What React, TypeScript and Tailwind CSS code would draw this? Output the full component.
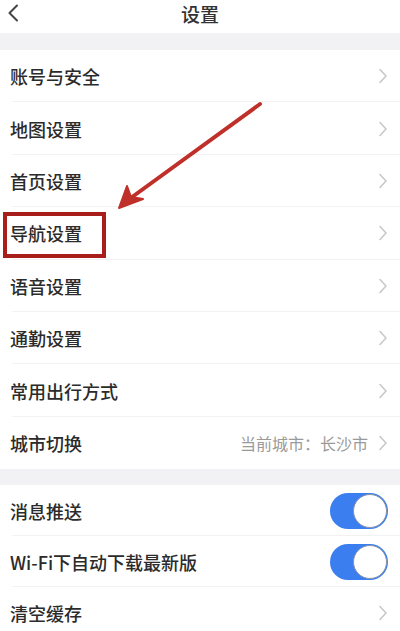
import React from "react";

const font = { fontFamily: '"Noto Sans CJK SC", "Noto Sans", sans-serif' };

function Chevron() {
  return (
    <svg width="10" height="16" viewBox="0 0 10 16" className="shrink-0">
      <path d="M2 1.5 L8 8 L2 14.5" fill="none" stroke="#c8c8cc" strokeWidth="1.6" strokeLinecap="round" strokeLinejoin="round" />
    </svg>
  );
}

function Toggle() {
  return (
    <div className="relative w-[58px] h-[36px] rounded-full bg-[#3a7ef0] shrink-0">
      <div className="absolute right-[1px] top-[1px] w-[34px] h-[34px] rounded-full bg-white border border-[#8c94a6]" />
    </div>
  );
}

function Row({ label, value, toggle, last, h = "h-[52.4px]" }: { label: string; value?: string; toggle?: boolean; last?: boolean; h?: string }) {
  return (
    <div className={`relative ${h} flex items-center pl-[10px] pr-[12px]`}>
      <span className="flex-1 text-[18px] font-medium text-[#2b2b2b] leading-none">{label}</span>
      {value && <span className="text-[16px] text-[#9a9a9a] mr-[10px] leading-none">{value}</span>}
      {toggle ? <Toggle /> : <Chevron />}
      {!last && <div className="absolute left-[12px] right-0 bottom-0 h-px bg-[#f2f2f2]" />}
    </div>
  );
}

export default function App() {
  const first = ["账号与安全", "地图设置", "首页设置", "导航设置", "语音设置", "通勤设置", "常用出行方式"];
  return (
    <div className="relative w-[400px] h-[631px] overflow-hidden bg-white" style={font}>
      {/* 顶部 */}
      <div className="relative h-[33px] flex items-center justify-center">
        <svg width="12" height="18" viewBox="0 0 12 18" className="absolute left-[7px] top-[4px]">
          <path d="M10 1.5 L2.5 9 L10 16.5" fill="none" stroke="#444" strokeWidth="2" strokeLinecap="round" strokeLinejoin="round" />
        </svg>
        <span className="text-[19px] font-medium text-[#333] leading-none -mt-[6px]">设置</span>
      </div>
      <div className="h-[17px] bg-[#f2f2f4]" />

      {first.map((t) => (
        <Row key={t} label={t} />
      ))}
      <Row label="城市切换" value="当前城市：长沙市" last />

      <div className="h-[16px] bg-[#f2f2f4]" />

      <Row label="消息推送" toggle h="h-[51px]" />
      <Row label="Wi-Fi下自动下载最新版" toggle h="h-[51px]" />
      <Row label="清空缓存" h="h-[52px]" last />

      {/* 标注 */}
      <div className="absolute left-[3px] top-[212px] w-[103px] h-[46px] border-[4px] border-[#a81e1a]" />
      <svg className="absolute left-0 top-0" width="400" height="631" viewBox="0 0 400 631">
        <line x1="260" y1="104" x2="128" y2="200" stroke="#c0302a" strokeWidth="4" strokeLinecap="round" />
        <path d="M119 208 L127 186 L131 197 L143 199 Z" fill="#c0302a" stroke="#c0302a" strokeWidth="2" strokeLinejoin="round" />
      </svg>
    </div>
  );
}
